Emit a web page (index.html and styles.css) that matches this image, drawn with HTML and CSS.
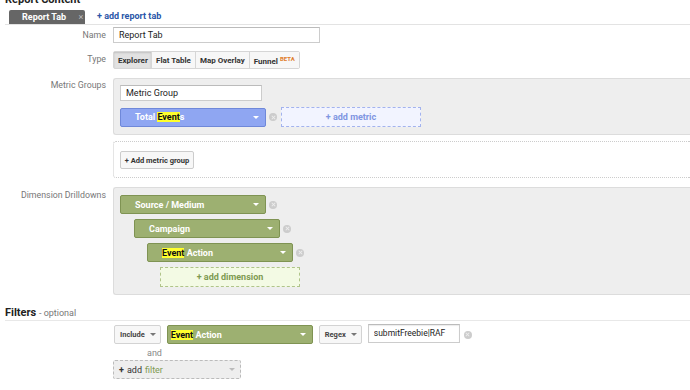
FILE: index.html
```html
<!DOCTYPE html>
<html lang="en">

<head>
    <meta charset="UTF-8">
    <title>Report Content</title>
    <link rel="stylesheet" href="styles.css">
</head>

<body>
    <h2 class="section-title">Report Content</h2>

    <div class="tabs">
        <div class="tab">Report Tab <span class="tab-close">&times;</span></div>
        <a href="#" class="add-tab">+ add report tab</a>
    </div>

    <div class="row row-name">
        <div class="label">Name</div>
        <input class="text-input name-input" type="text" value="Report Tab">
    </div>

    <div class="row row-type">
        <div class="label">Type</div>
        <div class="btn-group">
            <button class="type-btn selected">Explorer</button>
            <button class="type-btn">Flat Table</button>
            <button class="type-btn">Map Overlay</button>
            <button class="type-btn">Funnel <sup class="beta">BETA</sup></button>
        </div>
    </div>

    <div class="row row-metrics">
        <div class="label">Metric Groups</div>
        <div class="content">
            <div class="gray-box metric-box">
                <input class="text-input group-input" type="text" value="Metric Group">
                <div class="pill-line">
                    <div class="pill blue"><span class="grip"></span><span class="pill-text">Total <mark>Event</mark>s</span><span class="caret"></span></div>
                    <span class="remove"></span>
                    <div class="add-slot blue-slot">+ add metric</div>
                </div>
            </div>
            <div class="dotted-box">
                <button class="plain-btn">+ Add metric group</button>
            </div>
        </div>
    </div>

    <div class="row row-dims">
        <div class="label">Dimension Drilldowns</div>
        <div class="content">
            <div class="gray-box dim-box">
                <div class="pill-line">
                    <div class="pill green"><span class="grip"></span><span class="pill-text">Source / Medium</span><span class="caret"></span></div>
                    <span class="remove"></span>
                </div>
                <div class="pill-line indent-1">
                    <div class="pill green"><span class="grip"></span><span class="pill-text">Campaign</span><span class="caret"></span></div>
                    <span class="remove"></span>
                </div>
                <div class="pill-line indent-2">
                    <div class="pill green"><span class="grip"></span><span class="pill-text"><mark>Event</mark> Action</span><span class="caret"></span></div>
                    <span class="remove"></span>
                </div>
                <div class="pill-line indent-3">
                    <div class="add-slot green-slot">+ add dimension</div>
                </div>
            </div>
        </div>
    </div>

    <h2 class="filters-title">Filters <span class="optional">- optional</span></h2>

    <div class="filter-area">
        <div class="filter-line">
            <div class="select">Include <span class="caret dark"></span></div>
            <div class="pill green filter-pill"><span class="pill-text"><mark>Event</mark> Action</span><span class="caret"></span></div>
            <div class="select">Regex <span class="caret dark"></span></div>
            <input class="text-input regex-input" type="text" value="submitFreebie|RAF">
            <span class="remove"></span>
        </div>
        <div class="and">and</div>
        <div class="add-filter"><b>+</b> add <span class="filter-word">filter</span><span class="caret light"></span></div>
    </div>
</body>

</html>
```

FILE: styles.css
```css
* {
    margin: 0;
    padding: 0;
    box-sizing: border-box;
}

body {
    font-family: Roboto, "Liberation Sans", Arial, sans-serif;
    font-size: 10px;
    color: #333;
    background: #fff;
    overflow: hidden;
    width: 690px;
    height: 390px;
}

.section-title {
    font-size: 11px;
    font-weight: bold;
    color: #222;
    line-height: 13px;
    margin: -7px 0 0 5px;
}

/* tabs */
.tabs {
    display: flex;
    align-items: flex-end;
    margin: 3px 0 0 5px;
    border-bottom: 1px solid #e3e3e3;
    height: 16px;
}

.tab {
    background: #666;
    color: #fff;
    font-weight: bold;
    font-size: 9px;
    height: 14px;
    line-height: 14px;
    width: 76px;
    margin-left: 4px;
    padding-left: 13px;
    border-radius: 2px 2px 0 0;
}

.tab-close {
    color: #bbb;
    margin-left: 10px;
    font-weight: normal;
}

.add-tab {
    color: #2a56a8;
    font-weight: bold;
    font-size: 9px;
    text-decoration: none;
    margin-left: 12px;
    line-height: 15px;
}

/* rows */
.row {
    display: flex;
    align-items: flex-start;
}

.label {
    width: 106px;
    text-align: right;
    color: #777;
    font-size: 8.8px;
    margin-right: 7px;
    flex-shrink: 0;
}

.content {
    flex: 1;
}

.row-name {
    margin-top: 2px;
    align-items: center;
}

.row-type {
    margin-top: 8px;
    align-items: center;
}

.row-type .label {
    margin-top: -2px;
}

.row-metrics {
    margin-top: 9px;
}

.row-metrics .label {
    padding-top: 2px;
}

.row-dims {
    margin-top: 9px;
}

.row-dims .label {
    padding-top: 3px;
}

.text-input {
    font-family: Roboto, "Liberation Sans", Arial, sans-serif;
    font-size: 9px;
    color: #222;
    border: 1px solid #ccc;
    border-top-color: #bbb;
    background: #fff;
    height: 16px;
    padding: 0 5px;
    outline: none;
}

.name-input {
    width: 207px;
}

/* type buttons */
.btn-group {
    display: flex;
    border: 1px solid #d6d6d6;
    border-radius: 2px;
    height: 18px;
}

.type-btn {
    font-family: Roboto, "Liberation Sans", Arial, sans-serif;
    font-size: 8px;
    font-weight: bold;
    color: #333;
    background: #f7f7f7;
    border: none;
    border-left: 1px solid #d6d6d6;
    padding: 0 4px;
    height: 16px;
}

.type-btn:first-child {
    border-left: none;
}

.type-btn.selected {
    background: #e2e2e2;
    box-shadow: inset 0 1px 2px rgba(0, 0, 0, 0.15);
    width: 37px;
}

.beta {
    color: #e07b2a;
    font-size: 6px;
    vertical-align: 3px;
}

/* boxes */
.gray-box {
    background: #eee;
    border: 1px solid #dcdcdc;
    border-right: none;
    border-radius: 3px 0 0 3px;
    padding: 6px 0 7px 6px;
}

.metric-box {
    height: 57px;
}

.group-input {
    width: 142px;
    height: 16px;
}

.pill-line {
    display: flex;
    align-items: center;
    margin-top: 6px;
}

.dim-box {
    height: 108px;
    padding-top: 2px;
}

.dim-box .pill-line {
    margin-top: 5px;
    height: 19px;
}

.indent-1 { margin-left: 14px; }
.indent-2 { margin-left: 27px; }
.indent-3 { margin-left: 40px; }

.dim-box .indent-3 {
    height: 20px;
}

.pill {
    position: relative;
    width: 146px;
    height: 19px;
    border-radius: 2px;
    color: #fff;
    font-weight: bold;
    font-size: 9px;
    display: flex;
    align-items: center;
    padding-left: 14px;
}

.pill.blue {
    background: #8fa6f2;
    border: 1px solid #6f88d9;
}

.pill.green {
    background: #9db071;
    border: 1px solid #7f9353;
}

.grip {
    position: absolute;
    left: 4px;
    top: 4px;
    width: 3px;
    height: 9px;
    background-image: radial-gradient(circle, rgba(255, 255, 255, 0.55) 0.6px, transparent 0.7px);
    background-size: 2px 2px;
}

.pill-text {
    flex: 1;
}

mark {
    background: #ffff2e;
    color: #111;
}

.caret {
    width: 0;
    height: 0;
    border-left: 3px solid transparent;
    border-right: 3px solid transparent;
    border-top: 3px solid #fff;
    margin-right: 6px;
}

.caret.dark {
    border-top-color: #777;
    margin: 0 0 0 6px;
}

.caret.light {
    border-top-color: #bbb;
    margin: 0 0 0 auto;
}

.remove {
    width: 8px;
    height: 8px;
    border-radius: 50%;
    background: #ccc;
    margin-left: 3px;
    position: relative;
    flex-shrink: 0;
}

.remove::before,
.remove::after {
    content: "";
    position: absolute;
    left: 3.5px;
    top: 1.5px;
    width: 1px;
    height: 5px;
    background: #eee;
    transform: rotate(45deg);
}

.remove::after {
    transform: rotate(-45deg);
}

.add-slot {
    width: 140px;
    height: 20px;
    line-height: 18px;
    text-align: center;
    font-size: 9px;
    font-weight: bold;
}

.blue-slot {
    margin-left: 4px;
    background: #f2f4ff;
    border: 1px dashed #a3b3ee;
    color: #8096e2;
}

.green-slot {
    background: #f3fae4;
    border: 1px dashed #b0c48a;
    color: #7e9a52;
}

.dotted-box {
    margin-top: 6px;
    height: 37px;
    border-top: 1px dotted #ccc;
    border-bottom: 1px dotted #ccc;
    border-left: 1px dotted #ccc;
    border-radius: 3px 0 0 3px;
    padding: 9px 0 0 6px;
}

.plain-btn {
    font-family: Roboto, "Liberation Sans", Arial, sans-serif;
    font-size: 7.5px;
    font-weight: bold;
    color: #333;
    background: #f7f7f7;
    border: 1px solid #ccc;
    border-radius: 2px;
    height: 18px;
    width: 74px;
    padding: 0 3px;
}

/* filters */
.filters-title {
    font-size: 11px;
    font-weight: bold;
    color: #222;
    margin: 12px 0 0 5px;
    padding-bottom: 1px;
    border-bottom: 1px solid #e8e8e8;
    line-height: 12px;
}

.optional {
    font-weight: normal;
    color: #777;
    font-size: 9px;
}

.filter-area {
    margin-left: 114px;
    margin-top: 4px;
}

.filter-line {
    display: flex;
    align-items: center;
}

.select {
    display: flex;
    align-items: center;
    height: 19px;
    padding: 0 4px 0 5px;
    border: 1px solid #d3d3d3;
    border-radius: 2px;
    background: #f7f7f7;
    font-size: 7.5px;
    font-weight: bold;
    color: #444;
}

.select .caret.dark {
    margin-left: 5px;
}

.filter-pill {
    margin: 0 6px;
    padding-left: 3px;
}

.regex-input {
    margin-left: 6px;
    width: 92px;
    height: 19px;
    font-size: 8.5px;
    margin-top: -3px;
    box-shadow: inset 0 1px 1px rgba(0, 0, 0, 0.08);
}

.filter-line .remove {
    margin-left: 4px;
    margin-top: 0;
}

.and {
    margin: 4px 0 0 33px;
    color: #888;
    font-size: 9px;
    line-height: 10px;
}

.add-filter {
    margin-top: 2px;
    margin-left: -1px;
    width: 128px;
    height: 19px;
    display: flex;
    align-items: center;
    padding: 0 5px;
    background: #eee;
    border: 1px dashed #bbb;
    border-radius: 2px;
    font-size: 9px;
    color: #333;
}

.add-filter b {
    margin-right: 3px;
}

.filter-word {
    color: #7e9a52;
    margin-left: 3px;
}
```
